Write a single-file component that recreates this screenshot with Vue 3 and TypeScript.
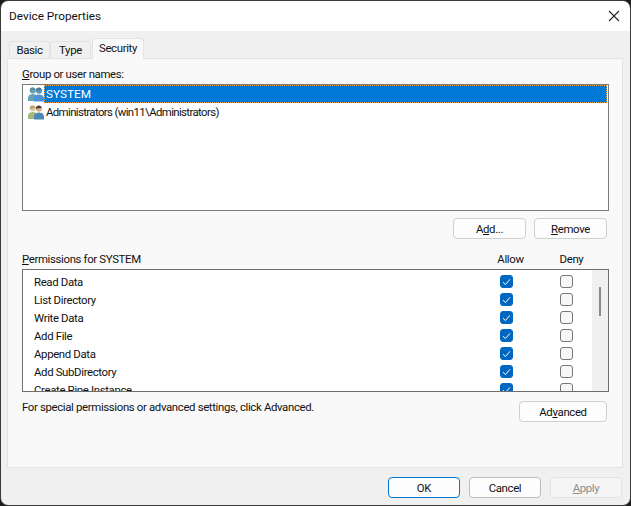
<script setup lang="ts">
const perms: string[] = ['Read Data', 'List Directory', 'Write Data', 'Add File', 'Append Data', 'Add SubDirectory', 'Create Pipe Instance']
</script>

<template>
  <div class="root">
    <div class="window">
      <header class="title">
        <span>Device Properties</span>
        <svg class="close" width="12" height="12" viewBox="0 0 12 12"><path d="M1 1 L11 11 M11 1 L1 11" stroke="#222" stroke-width="1.1" fill="none" /></svg>
      </header>
      <main class="body">
        <nav class="tabs">
          <div class="tab">Basic</div>
          <div class="tab">Type</div>
          <div class="tab active">Security</div>
        </nav>
        <section class="panel">
          <div class="label first"><u>G</u>roup or user names:</div>
          <div class="users">
            <div class="user">
              <svg class="uicon" width="16" height="16" viewBox="0 0 16 16">
                <circle cx="4.8" cy="4.6" r="3" fill="#6a9fb0" />
                <path d="M4.5 1.5 C2.5 1.5 1.5 3 1.8 5 C3.5 4.5 6 4.2 7.6 3.5 C7 2.2 6 1.5 4.5 1.5 Z" fill="#5a8ea2" />
                <path d="M0 15 L0 11.5 C0.5 9 2.5 8 4.8 8 C7 8 9 9 9.5 11.5 L9.5 15 Z" fill="#67a0b3" />
                <circle cx="11" cy="4.8" r="3" fill="#5a93bc" />
                <path d="M10.8 1.6 C9 1.6 7.8 3 8 5 C9.5 4.5 12 4.2 13.8 3.6 C13.2 2.3 12.2 1.6 10.8 1.6 Z" fill="#447aa3" />
                <path d="M6 15.5 L6 12 C6.5 9.5 8.5 8.4 11 8.4 C13.5 8.4 15.5 9.5 16 12 L16 15.5 Z" fill="#4a93d6" />
              </svg>
              <span class="uname selected">SYSTEM</span>
            </div>
            <div class="user">
              <svg class="uicon" width="16" height="16" viewBox="0 0 16 16">
                <circle cx="4.8" cy="4.6" r="3" fill="#dcc9a0" />
                <path d="M4.5 1.5 C2.5 1.5 1.5 3 1.8 5 C3.5 4.5 6 4.2 7.6 3.5 C7 2.2 6 1.5 4.5 1.5 Z" fill="#b4a268" />
                <path d="M0 15 L0 11.5 C0.5 9 2.5 8 4.8 8 C7 8 9 9 9.5 11.5 L9.5 15 Z" fill="#a3b97a" />
                <circle cx="11" cy="4.8" r="3" fill="#d9b08c" />
                <path d="M10.8 1.6 C9 1.6 7.8 3 8 5 C9.5 4.5 12 4.2 13.8 3.6 C13.2 2.3 12.2 1.6 10.8 1.6 Z" fill="#4a3d34" />
                <path d="M6 15.5 L6 12 C6.5 9.5 8.5 8.4 11 8.4 C13.5 8.4 15.5 9.5 16 12 L16 15.5 Z" fill="#4f86b8" />
              </svg>
              <span class="uname admin">Administrators (win11\Administrators)</span>
            </div>
          </div>
          <div class="row-buttons">
            <button class="btn">A<u>d</u>d...</button>
            <button class="btn"><u>R</u>emove</button>
          </div>
          <div class="perm-head">
            <span class="perm-title"><u>P</u>ermissions for SYSTEM</span>
            <span class="col">Allow</span>
            <span class="col">Deny</span>
          </div>
          <div class="perms">
            <div class="perm-rows">
              <div v-for="p in perms" :key="p" class="perm">
                <span class="perm-name">{{ p }}</span>
                <span class="check on">
                  <svg width="9" height="8" viewBox="0 0 9 8"><path d="M1 4.2 L3.4 6.5 L8 1.3" stroke="#fff" stroke-width="1" fill="none" /></svg>
                </span>
                <span class="check"></span>
              </div>
            </div>
            <div class="scroll"><div class="thumb"></div></div>
          </div>
          <div class="advanced">
            <span>For special permissions or advanced settings, click Advanced.</span>
            <button class="btn adv">Ad<u>v</u>anced</button>
          </div>
        </section>
        <footer class="footer">
          <button class="btn foot primary">OK</button>
          <button class="btn foot dark">Cancel</button>
          <button class="btn foot disabled"><u>A</u>pply</button>
        </footer>
      </main>
    </div>
  </div>
</template>

<style scoped>
.root {
  width: 631px;
  height: 506px;
  background: #1c1c1c;
  font-family: Roboto, "Liberation Sans", sans-serif;
  font-size: 11.4px;
  letter-spacing: -0.35px;
  color: #111;
}
.window {
  box-sizing: border-box;
  width: 631px;
  height: 506px;
  border: 1px solid #3a3a3a;
  border-radius: 8px;
  overflow: hidden;
  display: flex;
  flex-direction: column;
}
.title {
  height: 30px;
  flex: none;
  background: #fff;
  display: flex;
  align-items: center;
  justify-content: space-between;
  padding: 0 10px 0 8px;
  font-size: 11.8px;
  letter-spacing: 0;
}
.body {
  flex: 1;
  background: #f0f0f0;
  display: flex;
  flex-direction: column;
  padding: 7px 7px 0 6px;
  min-height: 0;
}
.tabs {
  display: flex;
  height: 20px;
  padding-left: 2px;
  align-items: flex-end;
  position: relative;
  z-index: 1;
}
.tab {
  box-sizing: border-box;
  height: 17px;
  width: 41px;
  background: #f0f0f0;
  border: 1px solid #e3e3e3;
  border-bottom: none;
  border-radius: 3px 3px 0 0;
  text-align: center;
  line-height: 17px;
}
.tab.active {
  width: 52px;
  height: 21px;
  margin-bottom: -1px;
  margin-left: 1px;
  background: #f9f9f9;
  line-height: 18px;
}
.panel {
  box-sizing: border-box;
  height: 410px;
  background: #f9f9f9;
  border: 1px solid #e3e3e3;
  padding: 9px 13px 0 14px;
  display: flex;
  flex-direction: column;
}
.label { height: 16px; line-height: 13px; }
.users {
  box-sizing: border-box;
  height: 127px;
  background: #fff;
  border: 1px solid #7a7a7a;
  padding: 0 1px 0 2px;
}
.user {
  height: 18px;
  display: flex;
  align-items: center;
}
.uicon { flex: none; margin-left: 3px; }
.uname {
  flex: 1;
  height: 18px;
  line-height: 19px;
  padding-left: 2px;
}
.uname.admin { letter-spacing: -0.62px; }
.uname.selected {
  background: #0078d7;
  color: #fff;
  font-size: 11.8px;
  letter-spacing: 0;
  outline: 1px dotted #f0a040;
  outline-offset: -1px;
}
.row-buttons {
  display: flex;
  justify-content: flex-end;
  gap: 8px;
  margin-top: 7px;
  padding-right: 2px;
}
.btn {
  box-sizing: border-box;
  width: 73px;
  height: 21px;
  padding: 0;
  background: #fdfdfd;
  border: 1px solid #d0d0d0;
  border-radius: 4px;
  font: inherit;
  letter-spacing: inherit;
  color: #111;
}
.perm-head {
  display: flex;
  align-items: center;
  margin-top: 11px;
  height: 18px;
}
.perm-title { flex: 1; }
.col { width: 61px; text-align: center; }
.col:last-child { margin-right: 7px; }
.perms {
  box-sizing: border-box;
  height: 123px;
  margin-top: 1px;
  background: #fff;
  border: 1px solid #6e6e6e;
  display: flex;
  overflow: hidden;
}
.perm-rows { flex: 1; padding-top: 3px; }
.perm {
  height: 18px;
  display: flex;
  align-items: flex-start;
  gap: 47px;
  padding: 0 19px 0 11px;
}
.perm-name { flex: 1; line-height: 18px; }
.check {
  box-sizing: border-box;
  flex: none;
  width: 13px;
  height: 13px;
  margin-top: 2px;
  border: 1px solid #767676;
  border-radius: 3px;
  background: #f7f7f7;
  display: flex;
  align-items: center;
  justify-content: center;
}
.check.on { background: #0067c0; border-color: #0067c0; }
.scroll {
  width: 16px;
  flex: none;
  background: #f0f0f0;
  padding-top: 17px;
  display: flex;
  justify-content: center;
}
.thumb {
  width: 2px;
  height: 29px;
  background: #8a8a8a;
}
.advanced {
  display: flex;
  justify-content: space-between;
  align-items: flex-start;
  margin-top: 9px;
  padding-right: 2px;
}
.advanced span { line-height: 13px; }
.btn.adv { width: 88px; }
.footer {
  display: flex;
  justify-content: flex-end;
  gap: 9px;
  margin-top: 9px;
  padding-right: 1px;
}
.btn.foot { width: 72px; }
.btn.primary { border: 1.5px solid #0078d4; }
.btn.dark { border-color: #bcbcbc; }
.btn.disabled { background: #f5f5f5; border-color: #e2e2e2; color: #8d8d8d; }
</style>
